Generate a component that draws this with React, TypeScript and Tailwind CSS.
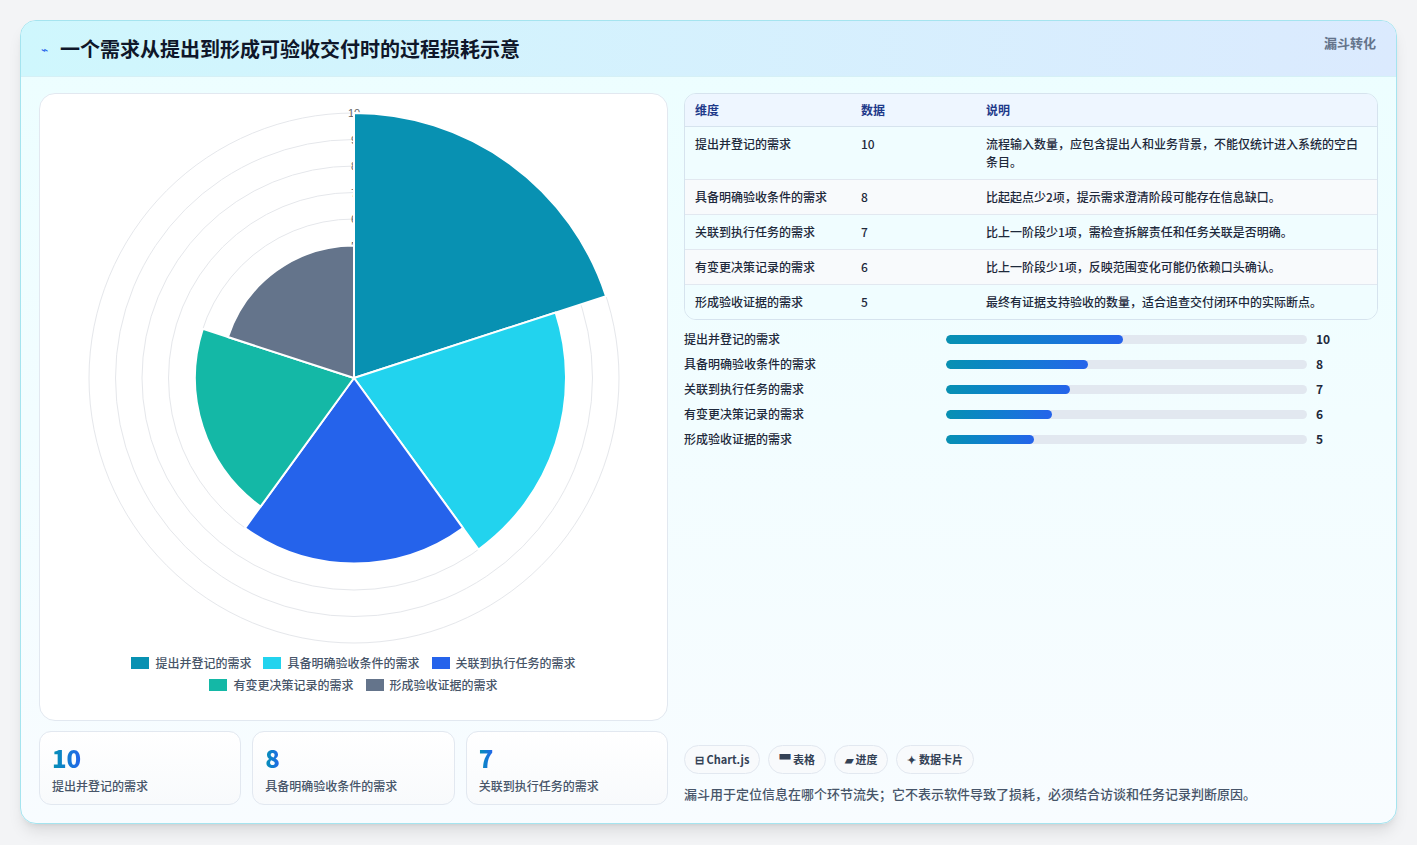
import React from "react";

const items = [
  { name: "提出并登记的需求", value: 10, color: "#0891b2", note: "流程输入数量，应包含提出人和业务背景，不能仅统计进入系统的空白条目。" },
  { name: "具备明确验收条件的需求", value: 8, color: "#22d3ee", note: "比起起点少2项，提示需求澄清阶段可能存在信息缺口。" },
  { name: "关联到执行任务的需求", value: 7, color: "#2563eb", note: "比上一阶段少1项，需检查拆解责任和任务关联是否明确。" },
  { name: "有变更决策记录的需求", value: 6, color: "#14b8a6", note: "比上一阶段少1项，反映范围变化可能仍依赖口头确认。" },
  { name: "形成验收证据的需求", value: 5, color: "#64748b", note: "最终有证据支持验收的数量，适合追查交付闭环中的实际断点。" },
];

const font = { fontFamily: '"Noto Sans CJK SC", "Noto Sans", sans-serif' };

function Polar() {
  const cx = 314, cy = 284, unit = 26.5;
  const pt = (r: number, deg: number) => {
    const a = (deg * Math.PI) / 180;
    return `${cx + r * Math.cos(a)} ${cy + r * Math.sin(a)}`;
  };
  return (
    <svg width="628" height="556" viewBox="0 0 628 556">
      {[1, 2, 3, 4, 5, 6, 7, 8, 9, 10].map((v) => (
        <circle key={v} cx={cx} cy={cy} r={v * unit} fill="none" stroke="#e5e7eb" strokeWidth="1" />
      ))}
      {[5, 6, 7, 8, 9, 10].map((v) => (
        <text key={v} x={cx} y={cy - v * unit + 4} textAnchor="middle" fontSize="11" fill="#666" fontFamily="Liberation Sans, sans-serif">{v}</text>
      ))}
      {items.map((it, i) => {
        const s = -90 + i * 72, e = s + 72, r = it.value * unit;
        return (
          <path key={i} d={`M ${cx} ${cy} L ${pt(r, s)} A ${r} ${r} 0 0 1 ${pt(r, e)} Z`} fill={it.color} stroke="#fff" strokeWidth="2" />
        );
      })}
    </svg>
  );
}

export default function App() {
  return (
    <div className="w-[1417px] h-[845px] bg-[#f3f4f6] pt-5 px-5" style={font}>
      <div className="rounded-2xl border border-[#a5e4ef] bg-gradient-to-b from-[#ecfeff] to-[#f8fcff] overflow-hidden shadow-lg h-[804px]">
        <div className="h-[56px] flex items-center justify-between px-5 bg-gradient-to-r from-[#cff7fd] to-[#dbeafe] border-b border-[#d5f0f6]">
          <div className="flex items-center gap-3">
            <span className="text-[#2563eb] text-xs">⌁</span>
            <h1 className="text-[20px] font-bold text-[#0f172a]">一个需求从提出到形成可验收交付时的过程损耗示意</h1>
          </div>
          <span className="text-[13px] font-bold text-[#64748b] self-start mt-3">漏斗转化</span>
        </div>
        <div className="flex gap-4 px-[18px] pt-4">
          <div className="w-[629px] flex flex-col gap-[10px]">
            <div className="h-[628px] rounded-2xl border border-[#e2e8f0] bg-white flex flex-col items-center pt-0">
              <Polar />
              <div className="flex flex-wrap justify-center gap-x-3 gap-y-[4px] w-[470px] mt-[4px] text-[12px] font-medium text-[#475569]">
                {items.map((it) => (
                  <div key={it.name} className="flex items-center gap-[6px]">
                    <span className="w-[18px] h-[12px]" style={{ background: it.color }} />
                    {it.name}
                  </div>
                ))}
              </div>
            </div>
            <div className="grid grid-cols-3 gap-[11px]">
              {items.slice(0, 3).map((it) => (
                <div key={it.name} className="h-[74px] rounded-xl border border-[#e2e8f0] bg-gradient-to-b from-white to-[#f8fafc] px-3 pt-3">
                  <div className="text-[24px] font-extrabold leading-7 bg-gradient-to-r from-[#0891b2] to-[#2563eb] bg-clip-text text-transparent w-fit">{it.value}</div>
                  <div className="text-[12px] font-medium text-[#475569] mt-[5px]">{it.name}</div>
                </div>
              ))}
            </div>
          </div>
          <div className="flex-1 flex flex-col">
            <div className="rounded-xl border border-[#d6e3ee] overflow-hidden text-[12px] font-medium">
              <div className="grid grid-cols-[166px_125px_1fr] bg-[#eef6ff] h-[33px] items-center px-[10px] font-bold text-[#1e3a8a] border-b border-[#d6e3ee]">
                <span>维度</span><span>数据</span><span>说明</span>
              </div>
              {items.map((it, i) => (
                <div key={it.name} className={`grid grid-cols-[166px_125px_1fr] px-[10px] py-[8px] leading-[18px] text-[#1e293b] border-b border-[#e2e8f0] last:border-b-0 ${i % 2 === 0 ? "bg-[#f0fdff]" : "bg-[#f8fafc]"}`}>
                  <span>{it.name}</span><span>{it.value}</span><span>{it.note}</span>
                </div>
              ))}
            </div>
            <div className="flex flex-col gap-[7px] mt-[10px]">
              {items.map((it) => (
                <div key={it.name} className="grid grid-cols-[262px_361px_1fr] items-center text-[12px] font-medium leading-[18px]">
                  <span className="text-[#1e293b]">{it.name}</span>
                  <div className="h-[9px] rounded-full bg-[#e2e8f0] overflow-hidden">
                    <div className="h-full rounded-full bg-gradient-to-r from-[#0891b2] to-[#2563eb]" style={{ width: `${it.value * 4.9}%` }} />
                  </div>
                  <span className="pl-[9px] font-bold text-[#1e293b]">{it.value}</span>
                </div>
              ))}
            </div>
            <div className="mt-auto pb-[2px]">
              <div className="flex gap-2 text-[11px] font-bold text-[#334155]">
                {["⊟ Chart.js", "▀ 表格", "▰ 进度", "✦ 数据卡片"].map((t) => (
                  <span key={t} className="rounded-full border border-[#e2e8f0] bg-[#f8fafc] px-[10px] py-[5px]">{t}</span>
                ))}
              </div>
              <p className="mt-[10px] text-[13px] font-medium text-[#475569]">漏斗用于定位信息在哪个环节流失；它不表示软件导致了损耗，必须结合访谈和任务记录判断原因。</p>
            </div>
          </div>
        </div>
      </div>
    </div>
  );
}
